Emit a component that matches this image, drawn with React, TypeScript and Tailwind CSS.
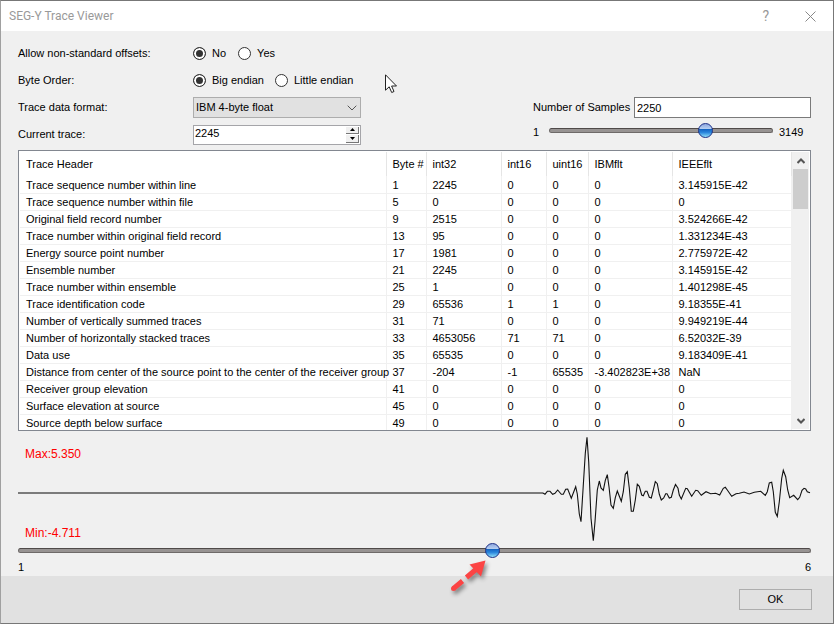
import React, { useState } from 'react';

const COLUMNS = ['Trace Header', 'Byte #', 'int32', 'int16', 'uint16', 'IBMflt', 'IEEEflt'];

const ROWS = [
  ['Trace sequence number within line', '1', '2245', '0', '0', '0', '3.145915E-42'],
  ['Trace sequence number within file', '5', '0', '0', '0', '0', '0'],
  ['Original field record number', '9', '2515', '0', '0', '0', '3.524266E-42'],
  ['Trace number within original field record', '13', '95', '0', '0', '0', '1.331234E-43'],
  ['Energy source point number', '17', '1981', '0', '0', '0', '2.775972E-42'],
  ['Ensemble number', '21', '2245', '0', '0', '0', '3.145915E-42'],
  ['Trace number within ensemble', '25', '1', '0', '0', '0', '1.401298E-45'],
  ['Trace identification code', '29', '65536', '1', '1', '0', '9.18355E-41'],
  ['Number of vertically summed traces', '31', '71', '0', '0', '0', '9.949219E-44'],
  ['Number of horizontally stacked traces', '33', '4653056', '71', '71', '0', '6.52032E-39'],
  ['Data use', '35', '65535', '0', '0', '0', '9.183409E-41'],
  ['Distance from center of the source point to the center of the receiver group', '37', '-204', '-1', '65535', '-3.402823E+38', 'NaN'],
  ['Receiver group elevation', '41', '0', '0', '0', '0', '0'],
  ['Surface elevation at source', '45', '0', '0', '0', '0', '0'],
  ['Source depth below surface', '49', '0', '0', '0', '0', '0'],
];

const WAVE =
  '543,493 545,494.3 547.3,491.3 550,491.3 552.7,494.3 555,493.3 557.7,490 561.3,494.3 563.3,494.3 565.7,489.3 567.7,489 571.3,498.3 575.7,486.7 577.3,494 579.3,514 581,521.7 585.3,453.3 587,437.3 588.7,461.7 591,518.3 593.3,540.7 595,521.7 597.3,490 599.3,481 601,488 603.3,490.3 605.3,480.3 607.3,474.7 609,486.7 611,505 613.3,508.3 615.3,497.7 617.3,491 621.3,501.3 623.3,491.7 625.3,474.3 627.3,471.7 629.3,488.3 631.3,511.3 633.3,511.3 635.3,500 637.3,484.3 639.3,486.3 641.7,495 643.3,495.7 645.3,491.3 647,491.3 649.3,497.3 651.3,498 653.7,488.3 655.3,481.7 657.3,483.7 659.3,494.3 661.3,500 663.7,498 665.7,493.7 667,493.7 669.3,498 671.3,497.3 673.3,490 675.5,484.5 678,488.3 679.3,495 681.3,499 685.7,488.3 687.3,488.7 691.7,496.3 695.7,490.3 697.7,490.7 701.3,495.3 706,491.7 710.7,493.7 715.7,493.3 719.7,495 723.3,488.3 725.3,487.3 727.3,490 731.7,496.3 736,493.7 739.3,493.3 744,492 749.3,494 754.3,492.3 760.7,491.3 765.3,495.3 767.3,491.7 769.3,483 771.7,482.3 773.3,491.7 775.3,512.3 777.3,516.3 779.3,501.7 781.7,478.3 783.3,470.3 785.7,476.7 787.7,490 789.7,497.7 793.7,495.3 797.7,499.7 799.7,497.3 802,490.3 804,488.3 805.7,489 807.3,491.7 810,492.7';

const SLIDER =
  'block h-[15px] appearance-none bg-transparent [&::-webkit-slider-runnable-track]:h-[5px] [&::-webkit-slider-runnable-track]:rounded-full [&::-webkit-slider-runnable-track]:border [&::-webkit-slider-runnable-track]:border-[#6e6a69] [&::-webkit-slider-runnable-track]:border-t-[#4f4a49] [&::-webkit-slider-runnable-track]:bg-[#979392] [&::-webkit-slider-thumb]:-mt-[6px] [&::-webkit-slider-thumb]:h-[15px] [&::-webkit-slider-thumb]:w-[15px] [&::-webkit-slider-thumb]:appearance-none [&::-webkit-slider-thumb]:rounded-full [&::-webkit-slider-thumb]:border [&::-webkit-slider-thumb]:border-[#1c2f86] [&::-webkit-slider-thumb]:bg-[linear-gradient(to_bottom,#8fa8e0_0%,#b4cdf0_35%,#1465c4_42%,#2a86dc_65%,#8fe0fa_100%)]';

function Radio({ name, label, checked, onChange }: { name: string; label: string; checked: boolean; onChange: () => void }) {
  return (
    <label className="flex items-center gap-[6px]">
      <input
        type="radio"
        name={name}
        checked={checked}
        onChange={onChange}
        className="h-[13px] w-[13px] appearance-none rounded-full border border-[#333] bg-white checked:bg-[#333] checked:shadow-[inset_0_0_0_2px_#fff]"
      />
      {label}
    </label>
  );
}

function App() {
  const [offsets, setOffsets] = useState('No');
  const [order, setOrder] = useState('Big endian');
  const [trace, setTrace] = useState(2245);
  const [samples, setSamples] = useState(2250);
  const [position, setPosition] = useState(4);

  return (
    <div className="flex min-h-screen flex-col border border-[#777] border-l-[#a0a0a0] bg-[#f0f0f0] font-['Liberation_Sans',Arial,sans-serif] text-[11px] leading-[15px] text-black">
      <header className="flex h-[30px] items-center bg-white pl-2 pr-[17px] font-[Roboto,Arial,sans-serif] text-[12px] text-[#999]">
        <h1 className="flex-1">SEG-Y Trace Viewer</h1>
        <button aria-label="Help" className="mr-[36px] text-[14px]">?</button>
        <button aria-label="Close">
          <svg className="h-[11px] w-[11px]" viewBox="0 0 11 11" stroke="#888" fill="none">
            <path d="M.5.5l10 10M10.5.5l-10 10" />
          </svg>
        </button>
      </header>

      <main className="relative flex-1 pb-[1px] pl-[17px] pr-[22px] pt-[9px]">
        <div className="flex items-end justify-between">
          <div className="grid grid-cols-[175px_168px] auto-rows-[27px] items-center">
            <span>Allow non-standard offsets:</span>
            <div className="flex gap-3">
              {['No', 'Yes'].map((o) => (
                <Radio key={o} name="offsets" label={o} checked={offsets === o} onChange={() => setOffsets(o)} />
              ))}
            </div>
            <span>Byte Order:</span>
            <div className="flex gap-[11px] whitespace-nowrap">
              {['Big endian', 'Little endian'].map((o) => (
                <Radio key={o} name="order" label={o} checked={order === o} onChange={() => setOrder(o)} />
              ))}
            </div>
            <label htmlFor="format">Trace data format:</label>
            <div className="relative">
              <select id="format" className="block h-[21px] w-full appearance-none border border-[#adadad] bg-[#e1e1e1] pl-[2px]">
                <option>IBM 4-byte float</option>
                <option>IEEE 4-byte float</option>
              </select>
              <svg className="pointer-events-none absolute right-1 top-2 h-[6px] w-[10px]" viewBox="0 0 10 6" fill="none" stroke="#555">
                <path d="M.7.7L5 5 9.300.7" />
              </svg>
            </div>
            <label htmlFor="trace">Current trace:</label>
            <div className="flex h-[20px] border border-[#a5a5a9] bg-white">
              <input
                id="trace"
                value={trace}
                onChange={(e) => setTrace(Number(e.target.value) || 0)}
                className="min-w-0 flex-1 pb-[2px] pl-[1px] outline-none"
              />
              <div className="flex w-[15px] flex-col gap-[1px] p-[1px]">
                <button aria-label="Next trace" onClick={() => setTrace(trace + 1)} className="flex flex-1 items-center justify-center border-b border-r border-[#777] bg-[#f0f0f0]">
                  <svg className="h-[3px] w-[5px]" viewBox="0 0 5 3"><path d="M0 3L2.500 0 5 3z" /></svg>
                </button>
                <button aria-label="Previous trace" onClick={() => setTrace(trace - 1)} className="flex flex-1 items-center justify-center border-b border-r border-[#777] bg-[#f0f0f0]">
                  <svg className="h-[3px] w-[5px]" viewBox="0 0 5 3"><path d="M0 0L2.500 3 5 0z" /></svg>
                </button>
              </div>
            </div>
          </div>

          <div className="grid w-[278px] auto-rows-[27px] items-center">
            <div className="flex items-center justify-between">
              <label htmlFor="samples">Number of Samples</label>
              <input
                id="samples"
                value={samples}
                onChange={(e) => setSamples(Number(e.target.value) || 0)}
                className="h-[21px] w-[177px] border border-[#7a7a7a] bg-white pl-[2px] outline-none"
              />
            </div>
            <div className="flex h-6 items-start">
              <span className="w-4 pt-[2px]">1</span>
              <input aria-label="Samples" type="range" min={1} max={3149} value={samples} onChange={(e) => setSamples(Number(e.target.value))} className={`${SLIDER} w-[224px]`} />
              <span className="pl-[6px] pt-[2px]">3149</span>
            </div>
          </div>
        </div>

        <div className="mt-[2px] flex h-[281px] overflow-hidden border border-[#828790] bg-white p-[1px]">
          <div className="flex-1">
            <table className="w-full table-fixed border-collapse whitespace-nowrap text-left">
              <colgroup>
                <col className="w-[366px]" />
                <col className="w-[40px]" />
                <col className="w-[75px]" />
                <col className="w-[45px]" />
                <col className="w-[42px]" />
                <col className="w-[84px]" />
                <col />
              </colgroup>
              <thead>
                <tr className="h-6">
                  {COLUMNS.map((c) => (
                    <th key={c} className="border-r border-[#e5e5e5] p-0 pl-[6px] font-normal">{c}</th>
                  ))}
                </tr>
              </thead>
              <tbody className="leading-[13px]">
                {ROWS.map((row) => (
                  <tr key={row[1]} className="h-[17px]">
                    {row.map((cell, i) => (
                      <td key={i} className="border-b border-r border-[#f0f0f0] p-0 pl-[6px] pt-[2px]">{cell}</td>
                    ))}
                  </tr>
                ))}
              </tbody>
            </table>
          </div>
          <div className="flex w-[17px] flex-col bg-[#f0f0f0]">
            <button aria-label="Scroll up" className="flex h-[17px] items-center justify-center">
              <svg className="h-[6px] w-[8px]" viewBox="0 0 8 6" fill="none" stroke="#555" strokeWidth="2"><path d="M.5 5L4 1.500 7.500 5" /></svg>
            </button>
            <div className="mx-[1px] h-10 bg-[#cdcdcd]" />
            <button aria-label="Scroll down" className="mt-auto flex h-[17px] items-center justify-center">
              <svg className="h-[6px] w-[8px]" viewBox="0 0 8 6" fill="none" stroke="#555" strokeWidth="2"><path d="M.5 1L4 4.500 7.500 1" /></svg>
            </button>
          </div>
        </div>

        <div className="relative text-[12px] text-[#f00]">
          <svg className="block h-[112px] w-full" viewBox="18 431 793 112" preserveAspectRatio="none" fill="none">
            <path d="M18 493H543" stroke="#555" strokeWidth="1.500" />
            <polyline points={WAVE} stroke="#111" strokeWidth="1.100" />
          </svg>
          <span className="absolute left-[7px] top-4">Max:5.350</span>
          <span className="absolute bottom-[2px] left-[7px]">Min:-4.711</span>
        </div>

        <div className="relative">
          <input aria-label="Trace position" type="range" min={1} max={6} value={position} onChange={(e) => setPosition(Number(e.target.value))} className={`${SLIDER} w-full`} />
          <svg className="pointer-events-none absolute left-[430px] top-[12px] h-[44px] w-[46px] drop-shadow-[2px_3px_2px_rgba(0,0,0,0.45)]" viewBox="448 555 46 44" fill="#fb4444" stroke="#fb4444">
            <path d="M485.500 560.500L469.500 564.500 481 576.500z" stroke="none" />
            <path d="M466.500 577.500L477 568.500M453.500 588.500L462.500 581" strokeWidth="5" />
            <circle cx="453.500" cy="588.500" r="2.500" stroke="none" />
          </svg>
        </div>
        <div className="flex justify-between pt-[2px]">
          <span>1</span>
          <span>6</span>
        </div>

        <svg className="pointer-events-none absolute left-[384px] top-[43px] h-[20px] w-[13px]" viewBox="0 0 13 20" fill="#fff" stroke="#222">
          <path d="M.5.8V16.200L4.200 12.800 6.700 18.500 9 17.500 6.600 12H11.500z" />
        </svg>
      </main>

      <footer className="flex justify-end bg-[#e1e1e1] pb-[13px] pr-[21px] pt-[13px]">
        <button className="h-[21px] w-[73px] border border-[#adadad] bg-[#e1e1e1]">OK</button>
      </footer>
    </div>
  );
}

export default App;
